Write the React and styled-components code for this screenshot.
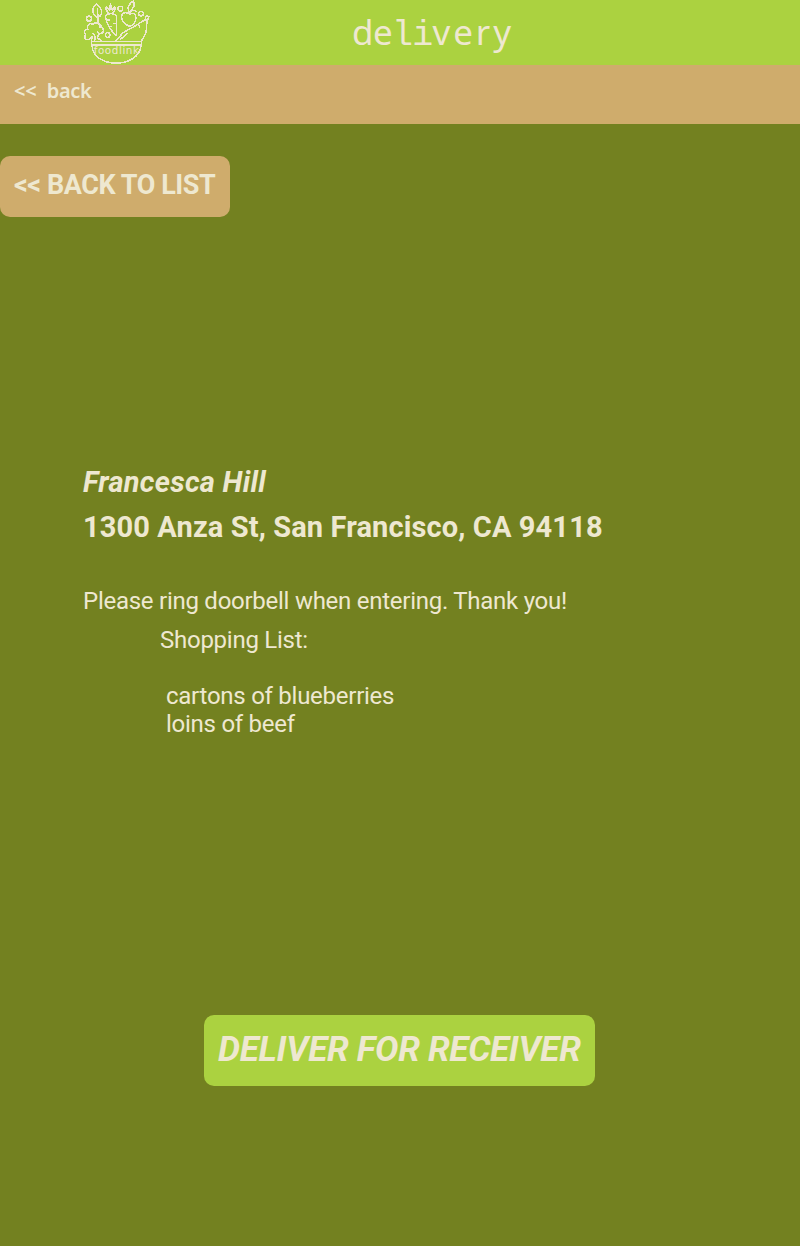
import React from "react";
import styled, { createGlobalStyle } from "styled-components";

const GlobalStyle = createGlobalStyle`
  * { box-sizing: border-box; }
  body { margin: 0; background: #738120; }
`;

const Page = styled.div`
  display: flex;
  flex-direction: column;
  min-height: 1246px;
  background: #738120;
  color: #eee8d0;
  font-family: Roboto, sans-serif;
`;

const Header = styled.header`
  display: grid;
  grid-template-columns: 76px 80px 1fr;
  height: 65px;
  background: #abd240;
`;

const Title = styled.h1`
  margin: 0;
  padding: 12px 0 0 196px;
  font: 400 35px/40px "Noto Sans", sans-serif;
  letter-spacing: -0.6px;
`;

const SlabLetters = styled.span`
  font-family: "Liberation Mono", monospace;
  letter-spacing: -0.8px;
`;

const WideLetters = styled.span`
  letter-spacing: 2.9px;
`;

const LogoArt = styled.svg`
  grid-column: 2;
  display: block;
  width: 80px;
  height: 65px;
`;

const NavBar = styled.nav`
  height: 59px;
  padding: 14px;
  background: #cfac6c;
`;

const BackLink = styled.a`
  display: block;
  font: 600 20px/24px "Noto Sans", sans-serif;
  letter-spacing: -0.3px;
  word-spacing: 5.5px;
`;

const Button = styled.button`
  border: 0;
  color: inherit;
  text-align: left;
  white-space: nowrap;
  font-family: inherit;
  font-weight: 700;
  border-radius: 10px;
`;

const ListButton = styled(Button)`
  width: 230px;
  height: 61px;
  margin-top: 32px;
  padding: 0 14px 3px;
  background: #cfac6c;
  font-size: 27px;
  letter-spacing: -0.43px;
`;

const DeliverButton = styled(Button)`
  width: 391px;
  height: 71px;
  margin: 277px 0 0 204px;
  padding: 0 14px 2px;
  background: #abd240;
  font-size: 35px;
  font-style: italic;
  letter-spacing: -0.3px;
`;

const Details = styled.main`
  display: flex;
  flex-direction: column;
  margin-top: 243px;
  padding-left: 83px;
  white-space: nowrap;
`;

const Name = styled.h2`
  margin: 0;
  font: italic 700 29px/45px Roboto, sans-serif;
  letter-spacing: 0.27px;
`;

const Address = styled.h2`
  margin: 0;
  font: 700 29px/45px Roboto, sans-serif;
  letter-spacing: 0.12px;
`;

const Note = styled.p`
  margin: 32px 0 0;
  font-size: 24px;
  line-height: 39px;
  letter-spacing: -0.26px;
`;

const ListTitle = styled.p`
  margin: 0 0 22px 77px;
  font-size: 24px;
  line-height: 39px;
  letter-spacing: -0.26px;
`;

const Items = styled.ul`
  margin: 0;
  padding: 0 0 0 83px;
  list-style: none;
  font-size: 24px;
  line-height: 28px;
  letter-spacing: -0.26px;
`;

function Logo() {
  return (
    <LogoArt viewBox="0 0 240 195" fill="none" stroke="#eee8d0" strokeWidth="4.5" strokeLinejoin="round" shapeRendering="crispEdges" aria-label="foodlink">
      <path d="M46 125H197V135H46Z" />
      <path d="M48 136C50 207 190 207 195 136" />
      <path d="M65 54C45 40 48 22 62 12C78 26 84 42 65 54ZM64 24L67 68L77 80" />
      <path d="M88 49C92 38 120 38 122 52L121 106C106 95 91 72 88 49ZM98 41L89 26L91 20L101 32L103 12L109 31L116 20L118 27L110 40M91 60H103M110 70H122M99 80H108" />
      <path d="M160 79C133 66 130 42 147 38C153 37 156 40 161 43C171 35 181 44 180 55C179 67 170 76 160 79ZM160 42L156 22L163 10L173 2L174 19L164 34M160 38C166 30 176 29 181 36" />
      <path d="M119 124L141 98L181 76L207 59L211 47L219 50L213 64L210 98L196 124M133 118L155 100M180 75C187 71 193 76 190 83M207 59L215 62" />
      <path d="M46 122L49 109L40 118C29 122 22 112 29 104C20 96 28 86 36 89C30 76 42 66 51 74C60 62 75 72 71 81C85 82 86 98 74 101C67 103 63 96 65 93M49 98L58 110L56 123M69 102L64 113L76 123" />
      <circle cx="39" cy="56" r="7.5" />
      <circle cx="133" cy="26" r="7" />
      <circle cx="195" cy="41" r="7" />
      <circle cx="95" cy="105" r="7" />
      <text x="53" y="161" fill="#eee8d0" stroke="none" fontFamily="DejaVu Sans, sans-serif" fontSize="31" textLength="136">foodlink</text>
    </LogoArt>
  );
}

export default function App() {
  return (
    <Page>
      <GlobalStyle />
      <Header>
        <Logo />
        <Title>de<SlabLetters>li</SlabLetters><WideLetters>very</WideLetters></Title>
      </Header>
      <NavBar><BackLink>&lt;&lt; back</BackLink></NavBar>
      <ListButton>&lt;&lt; BACK TO LIST</ListButton>
      <Details>
        <Name>Francesca Hill</Name>
        <Address>1300 Anza St, San Francisco, CA 94118</Address>
        <Note>Please ring doorbell when entering. Thank you!</Note>
        <ListTitle>Shopping List:</ListTitle>
        <Items>
          <li>cartons of blueberries</li>
          <li>loins of beef</li>
        </Items>
      </Details>
      <DeliverButton>DELIVER FOR RECEIVER</DeliverButton>
    </Page>
  );
}
